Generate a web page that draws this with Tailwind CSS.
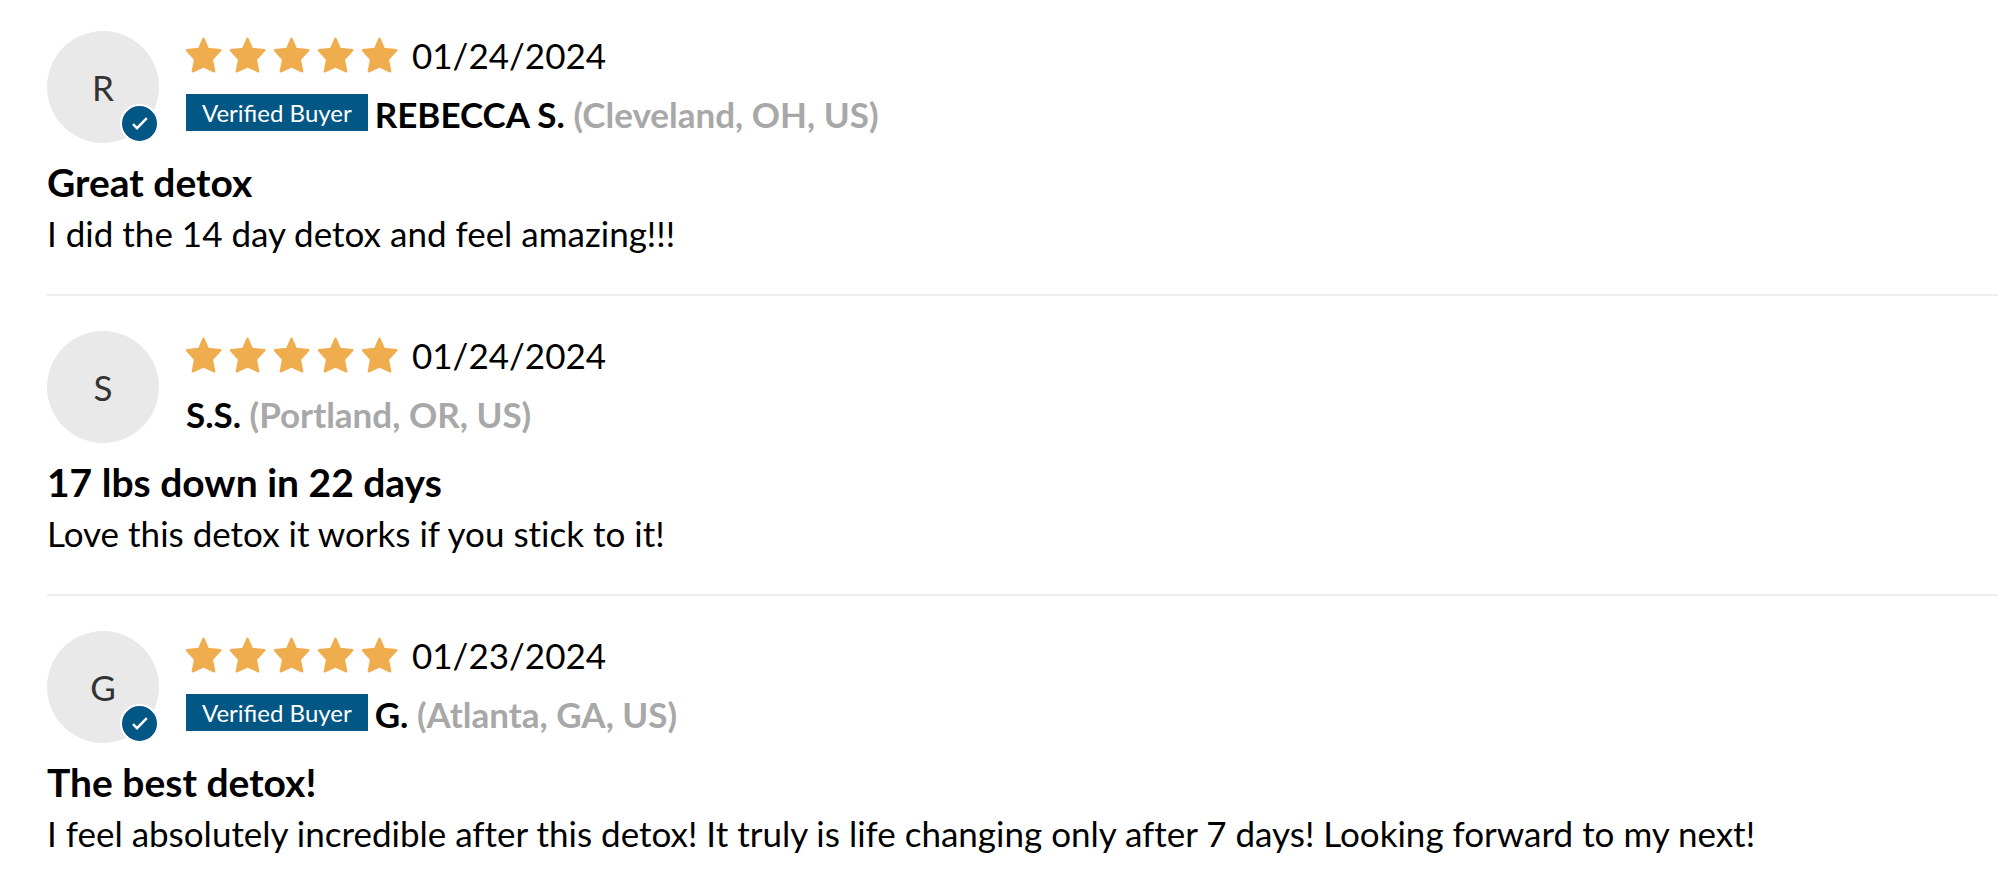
<!DOCTYPE html>
<html lang="en">
<head>
    <meta charset="UTF-8">
    <meta name="viewport" content="width=device-width, initial-scale=1.0">
    <title>Customer Reviews</title>
    <script src="https://cdn.jsdelivr.net/npm/@tailwindcss/browser@4"></script>
</head>
<body class="bg-white text-black font-['Lato',sans-serif] text-[35px] leading-[52px]">
    <!-- shared icons -->
    <svg class="hidden">
        <symbol id="star" viewBox="0 0 36 36">
            <path d="M17.5 1.6 L21.9 11.8 L34.4 13.2 L25.9 22.4 L28.3 34.4 L17.5 29.4 L6.7 34.4 L9.1 22.4 L0.9 13.2 L13.1 11.8 Z" fill="#f0ad4e" stroke="#f0ad4e" stroke-width="2.2" stroke-linejoin="round"/>
        </symbol>
        <symbol id="check" viewBox="0 0 35 35">
            <path d="M11 18.2 L15 22.2 L24.8 12.2" fill="none" stroke="#fff" stroke-width="2.4"/>
        </symbol>
    </svg>

    <main class="pl-[47px] pt-[31px]">
        <article class="pb-[35px] border-b-2 border-[#ededed]">
            <header class="flex gap-[27px]">
                <div class="relative size-28 shrink-0 rounded-full bg-[#e9e9e9] text-[#333] flex items-center justify-center">
                    R
                    <span class="absolute right-0 bottom-0 size-[39px] rounded-full border-2 border-white bg-[#035784]">
                        <svg class="size-full"><use href="#check"/></svg>
                    </span>
                </div>
                <div class="flex flex-col gap-[11px] leading-[48px]">
                    <div class="flex items-center gap-[14px]">
                        <div class="flex gap-2" role="img" aria-label="5 out of 5 stars">
                            <svg class="size-9"><use href="#star"/></svg>
                            <svg class="size-9"><use href="#star"/></svg>
                            <svg class="size-9"><use href="#star"/></svg>
                            <svg class="size-9"><use href="#star"/></svg>
                            <svg class="size-9"><use href="#star"/></svg>
                        </div>
                        <time datetime="2024-01-24">01/24/2024</time>
                    </div>
                    <div class="flex items-center gap-[7px]">
                        <span class="mb-[3px] bg-[#035784] px-4 text-2xl leading-[37px] text-white">Verified Buyer</span>
                        <p class="font-bold">REBECCA S. <span class="text-[#a8a8a8]">(Cleveland, OH, US)</span></p>
                    </div>
                </div>
            </header>
            <h2 class="mt-[14px] text-[39px] leading-[50px] font-bold">Great detox</h2>
            <p>I did the 14 day detox and feel amazing!!!</p>
        </article>

        <article class="pt-[35px] pb-[35px] border-b-2 border-[#ededed]">
            <header class="flex gap-[27px]">
                <div class="relative size-28 shrink-0 rounded-full bg-[#e9e9e9] text-[#333] flex items-center justify-center">
                    S
                </div>
                <div class="flex flex-col gap-[11px] leading-[48px]">
                    <div class="flex items-center gap-[14px]">
                        <div class="flex gap-2" role="img" aria-label="5 out of 5 stars">
                            <svg class="size-9"><use href="#star"/></svg>
                            <svg class="size-9"><use href="#star"/></svg>
                            <svg class="size-9"><use href="#star"/></svg>
                            <svg class="size-9"><use href="#star"/></svg>
                            <svg class="size-9"><use href="#star"/></svg>
                        </div>
                        <time datetime="2024-01-24">01/24/2024</time>
                    </div>
                    <p class="font-bold">S.S. <span class="text-[#a8a8a8]">(Portland, OR, US)</span></p>
                </div>
            </header>
            <h2 class="mt-[14px] text-[39px] leading-[50px] font-bold">17 lbs down in 22 days</h2>
            <p class="[font-variant-ligatures:none]">Love this detox it works if you stick to it!</p>
        </article>

        <article class="pt-[35px]">
            <header class="flex gap-[27px]">
                <div class="relative size-28 shrink-0 rounded-full bg-[#e9e9e9] text-[#333] flex items-center justify-center">
                    G
                    <span class="absolute right-0 bottom-0 size-[39px] rounded-full border-2 border-white bg-[#035784]">
                        <svg class="size-full"><use href="#check"/></svg>
                    </span>
                </div>
                <div class="flex flex-col gap-[11px] leading-[48px]">
                    <div class="flex items-center gap-[14px]">
                        <div class="flex gap-2" role="img" aria-label="5 out of 5 stars">
                            <svg class="size-9"><use href="#star"/></svg>
                            <svg class="size-9"><use href="#star"/></svg>
                            <svg class="size-9"><use href="#star"/></svg>
                            <svg class="size-9"><use href="#star"/></svg>
                            <svg class="size-9"><use href="#star"/></svg>
                        </div>
                        <time datetime="2024-01-23">01/23/2024</time>
                    </div>
                    <div class="flex items-center gap-[7px]">
                        <span class="mb-[3px] bg-[#035784] px-4 text-2xl leading-[37px] text-white">Verified Buyer</span>
                        <p class="font-bold">G. <span class="text-[#a8a8a8]">(Atlanta, GA, US)</span></p>
                    </div>
                </div>
            </header>
            <h2 class="mt-[14px] text-[39px] leading-[50px] font-bold">The best detox!</h2>
            <p class="[font-variant-ligatures:none]">I feel absolutely incredible after this detox! It truly is life changing only after 7 days! Looking forward to my next!</p>
        </article>
    </main>
</body>
</html>
